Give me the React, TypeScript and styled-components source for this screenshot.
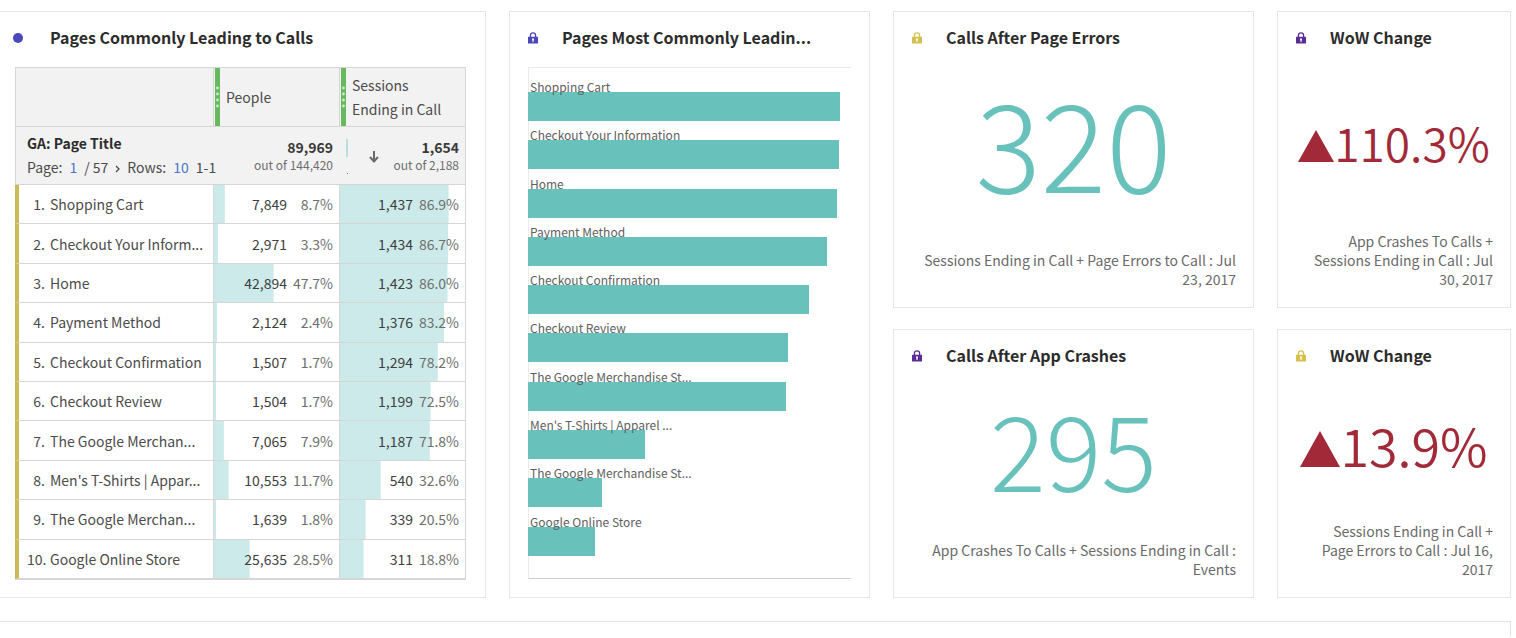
import React from "react";
import styled, { createGlobalStyle } from "styled-components";

const GlobalStyle = createGlobalStyle`
  *, *::before, *::after { box-sizing: border-box; }
  body {
    margin: 0;
    background: #fff;
    color: #4b4b4b;
    font-family: "Noto Sans CJK JP", "Noto Sans", sans-serif;
    font-size: 14px;
    line-height: 20px;
    overflow-x: hidden;
  }
`;

const Page = styled.main`
  padding: 11px 5px 0 0;
`;

const Board = styled.div`
  display: grid;
  grid-template-columns: minmax(0, 486fr) minmax(0, 361fr) minmax(0, 361fr) minmax(0, 234fr);
  grid-template-rows: 297px 269px;
  gap: 21px 23px;
`;

const Card = styled.section<{ $tall?: boolean; $cut?: boolean }>`
  display: flex;
  flex-direction: column;
  min-width: 0;
  border: 1px solid #e6e6e6;
  ${(p) => p.$cut && "border-left: 0;"}
  ${(p) => p.$tall && "grid-row: 1 / span 2;"}
`;

const NextPanel = styled.section`
  height: 16px;
  margin-top: 23px;
  border: 1px solid #e4e4e4;
  border-width: 1px 1px 0 0;
`;

const CardHead = styled.header<{ $cut?: boolean }>`
  display: flex;
  align-items: center;
  height: 55px;
  flex: none;
  padding: 0 16px 4px ${(p) => (p.$cut ? 13 : 17)}px;
`;

const Mark = styled.span<{ $cut?: boolean }>`
  display: flex;
  width: ${(p) => (p.$cut ? 37 : 35)}px;
  flex: none;
`;

const Title = styled.h2`
  margin: 0;
  padding-bottom: 2px;
  font-size: 16px;
  line-height: 24px;
  font-weight: 700;
  color: #2c2c2c;
  white-space: nowrap;
`;

const Dot = styled.i`
  width: 10px;
  height: 10px;
  border-radius: 50%;
  background: #4b46b9;
`;

const Lock = ({ color }: { color: string }) => (
  <svg width="12" height="12" viewBox="0 0 12 12" aria-hidden="true">
    <path d="M3.4 5.5V3.4a2.6 2.6 0 0 1 5.2 0v2.1" fill="none" stroke={color} strokeWidth="1.3" />
    <rect x="1" y="4.7" width="10" height="6.8" rx="0.6" fill={color} />
    <circle cx="6" cy="7.3" r="1" fill="#fff" />
    <rect x="5.4" y="7.6" width="1.2" height="2.3" fill="#fff" />
  </svg>
);

const Table = styled.table`
  width: calc(100% - 34px);
  margin: 0 19px 0 15px;
  height: 513px;
  border-collapse: separate;
  border-spacing: 0;
  table-layout: fixed;
  border: solid #d6d6d6;
  border-width: 1px 1px 1px 0;
`;

const NameCol = styled.col`
  width: 44%;
`;

const MetricCol = styled.col`
  width: 28%;
`;

const HeadCell = styled.th`
  height: 59px;
  padding: 0;
  background: #f2f2f2;
  border: solid #d6d6d6;
  border-width: 0 0 1px 1px;
  font-weight: 400;
  text-align: left;
  line-height: 24px;
`;

const HeadInner = styled.div`
  display: flex;
  align-items: center;
  height: 58px;
  gap: 6px;
  padding-left: 1px;
`;

const Grip = styled.svg`
  flex: none;
  width: 5px;
  height: 58px;
  background: #66b95c;
`;

const SumCell = styled.td`
  height: 58px;
  padding: 0 6px 0 0;
  background: #f2f2f2;
  border-bottom: 1px solid #d6d6d6;
  text-align: right;
`;

const SumName = styled.th`
  padding: 0 0 2px 11px;
  background: #f2f2f2;
  border: solid #d6d6d6;
  border-width: 0 0 1px 1px;
  text-align: left;
  white-space: nowrap;
  line-height: 24px;
  font-weight: 700;
  color: #2c2c2c;
`;

const Pager = styled.div`
  display: flex;
  align-items: center;
  font-weight: 400;
  color: #4b4b4b;
`;

const PagerButton = styled.button<{ $link?: boolean }>`
  margin: 0 7px;
  padding: 0;
  border: 0;
  background: none;
  font: inherit;
  color: ${(p) => (p.$link ? "#4a76c9" : "#4b4b4b")};
`;

const Total = styled.div`
  line-height: 18px;
  font-weight: 700;
  color: #3a3a3a;
`;

const OutOf = styled.div`
  font-size: 12px;
  line-height: 18px;
  color: #6e6e6e;
`;

const SortedSum = styled.div`
  display: flex;
  align-items: center;
  justify-content: space-between;
  padding-left: 6px;
`;

const NameCell = styled.th`
  padding: 0 0 0 8px;
  border: solid #d6d6d6;
  border-width: 0 0 1px 4px;
  border-left-color: #cbbb55;
  font-weight: 400;
  text-align: left;
  white-space: nowrap;
`;

const Rank = styled.span`
  display: inline-block;
  width: 18px;
  margin-right: 5px;
  text-align: right;
`;

const ValueCell = styled.td`
  padding: 0 6px 0 0;
  border: solid #d6d6d6;
  border-width: 0 0 1px 1px;
  text-align: right;
  white-space: nowrap;
  color: #3e3e3e;
  background: linear-gradient(#cdeaea, #cdeaea) no-repeat;
`;

const Percent = styled.span`
  display: inline-block;
  width: 46px;
  color: #6e6e6e;
`;

const Chart = styled.div`
  flex: 1;
  display: grid;
  grid-auto-rows: minmax(0, 1fr);
  margin: 0 18px 18px;
  padding: 10px 0 17px;
  border: solid #ebebeb;
  border-width: 1px 0 1px 1px;
  border-bottom-color: #cfcfcf;
`;

const BarLabel = styled.div`
  padding-left: 1px;
  font-size: 12px;
  line-height: 18px;
  color: #606060;
  white-space: nowrap;
`;

const Bar = styled.div`
  height: 29px;
  margin: -4px 0 0 -1px;
  background: #69c1bb;
`;

const Figure = styled.div<{ $size: number; $alert?: boolean }>`
  flex: 1;
  display: flex;
  align-items: center;
  justify-content: center;
  padding-bottom: ${(p) => Math.round(p.$size * 0.32)}px;
  font-size: ${(p) => p.$size}px;
  line-height: 1;
  font-weight: ${(p) => (p.$alert ? 350 : 300)};
  color: ${(p) => (p.$alert ? "#a22a38" : "#69c1bb")};
  white-space: nowrap;
`;

const FigureValue = styled.div`
  display: flex;
  align-items: baseline;
`;

const Triangle = styled.svg`
  flex: none;
  fill: currentColor;
`;

const Caption = styled.p`
  margin: 0 17px 18px 28px;
  line-height: 19px;
  color: #6a6a6a;
  text-align: right;
`;

const rows: [string, string, string, number, number, number][] = [
  ["Shopping Cart", "Shopping Cart", "7,849", 8.7, 1437, 86.9],
  ["Checkout Your Inform...", "Checkout Your Information", "2,971", 3.3, 1434, 86.7],
  ["Home", "Home", "42,894", 47.7, 1423, 86.0],
  ["Payment Method", "Payment Method", "2,124", 2.4, 1376, 83.2],
  ["Checkout Confirmation", "Checkout Confirmation", "1,507", 1.7, 1294, 78.2],
  ["Checkout Review", "Checkout Review", "1,504", 1.7, 1199, 72.5],
  ["The Google Merchan...", "The Google Merchandise St...", "7,065", 7.9, 1187, 71.8],
  ["Men's T-Shirts | Appar...", "Men's T-Shirts | Apparel ...", "10,553", 11.7, 540, 32.6],
  ["The Google Merchan...", "The Google Merchandise St...", "1,639", 1.8, 339, 20.5],
  ["Google Online Store", "Google Online Store", "25,635", 28.5, 311, 18.8],
];

const CHART_MAX = 1484;

const GripDots = () => (
  <Grip viewBox="0 0 5 58" aria-hidden="true">
    {[20, 26, 32, 38].map((y) => (
      <circle key={y} cx="2.5" cy={y} r="1.4" fill="#d0ebcc" />
    ))}
  </Grip>
);

type MetricProps = {
  title: string;
  lock: string;
  value: string;
  size: number;
  triangle?: number;
  children: React.ReactNode;
};

const MetricCard = ({ title, lock, value, size, triangle, children }: MetricProps) => (
  <Card>
    <CardHead>
      <Mark>
        <Lock color={lock} />
      </Mark>
      <Title>{title}</Title>
    </CardHead>
    <Figure $size={size} $alert={!!triangle}>
      <FigureValue>
        {triangle && (
          <Triangle width={triangle} height={triangle - 4} viewBox="0 0 40 36" preserveAspectRatio="none">
            <path d="M20 0L40 36H0z" />
          </Triangle>
        )}
        <span>{value}</span>
      </FigureValue>
    </Figure>
    <Caption>{children}</Caption>
  </Card>
);

export default function App() {
  return (
    <Page>
      <GlobalStyle />
      <Board>
        <Card $tall $cut>
          <CardHead $cut>
            <Mark $cut>
              <Dot />
            </Mark>
            <Title>Pages Commonly Leading to Calls</Title>
          </CardHead>
          <Table>
            <colgroup>
              <NameCol />
              <MetricCol />
              <MetricCol />
            </colgroup>
            <thead>
              <tr>
                <HeadCell />
                <HeadCell>
                  <HeadInner>
                    <GripDots />
                    People
                  </HeadInner>
                </HeadCell>
                <HeadCell>
                  <HeadInner>
                    <GripDots />
                    <span>
                      Sessions
                      <br />
                      Ending in Call
                    </span>
                  </HeadInner>
                </HeadCell>
              </tr>
              <tr>
                <SumName>
                  GA: Page Title
                  <Pager>
                    Page:
                    <PagerButton $link>1</PagerButton>/ 57
                    <PagerButton aria-label="Next page">
                      <svg width="5" height="8" viewBox="0 0 5 8" fill="none" stroke="currentColor" strokeWidth="1.3">
                        <path d="M1 1l3 3-3 3" />
                      </svg>
                    </PagerButton>
                    Rows:
                    <PagerButton $link>10</PagerButton>
                    1-1
                  </Pager>
                </SumName>
                <SumCell>
                  <Total>89,969</Total>
                  <OutOf>out of 144,420</OutOf>
                </SumCell>
                <SumCell>
                  <SortedSum>
                    <svg width="40" height="40" viewBox="0 0 40 40" aria-hidden="true">
                      <rect x="1" y="3" width="2" height="18" fill="#b4dfdf" />
                      <rect x="2" y="37" width="1" height="1" fill="#777" />
                      <path d="M29 15v10M25 21l4 4.4 4-4.4" fill="none" stroke="#6a6a6a" strokeWidth="2" />
                    </svg>
                    <div>
                      <Total>1,654</Total>
                      <OutOf>out of 2,188</OutOf>
                    </div>
                  </SortedSum>
                </SumCell>
              </tr>
            </thead>
            <tbody>
              {rows.map(([name, , people, share, calls, rate], i) => (
                <tr key={i}>
                  <NameCell scope="row">
                    <Rank>{i + 1}.</Rank>
                    {name}
                  </NameCell>
                  <ValueCell style={{ backgroundSize: `${share}% 100%` }}>
                    {people}
                    <Percent>{share.toFixed(1)}%</Percent>
                  </ValueCell>
                  <ValueCell style={{ backgroundSize: `${rate}% 100%` }}>
                    {calls.toLocaleString("en-US")}
                    <Percent>{rate.toFixed(1)}%</Percent>
                  </ValueCell>
                </tr>
              ))}
            </tbody>
          </Table>
        </Card>

        <Card $tall>
          <CardHead>
            <Mark>
              <Lock color="#4b46b9" />
            </Mark>
            <Title>Pages Most Commonly Leadin...</Title>
          </CardHead>
          <Chart>
            {rows.map(([, label, , , calls], i) => (
              <div key={i}>
                <BarLabel>{label}</BarLabel>
                <Bar style={{ width: `${(calls / CHART_MAX) * 100}%` }} />
              </div>
            ))}
          </Chart>
        </Card>

        <MetricCard title="Calls After Page Errors" lock="#d4c04c" value="320" size={122}>
          Sessions Ending in Call + Page Errors to Call : Jul 23, 2017
        </MetricCard>
        <MetricCard title="WoW Change" lock="#5a2d96" value="110.3%" size={46} triangle={36}>
          App Crashes To Calls + Sessions Ending in Call : Jul 30, 2017
        </MetricCard>
        <MetricCard title="Calls After App Crashes" lock="#5a2d96" value="295" size={104}>
          App Crashes To Calls + Sessions Ending in Call : Events
        </MetricCard>
        <MetricCard title="WoW Change" lock="#d4c04c" value="13.9%" size={52} triangle={40}>
          Sessions Ending in Call + Page Errors to Call : Jul 16, 2017
        </MetricCard>
      </Board>
      <NextPanel />
    </Page>
  );
}
